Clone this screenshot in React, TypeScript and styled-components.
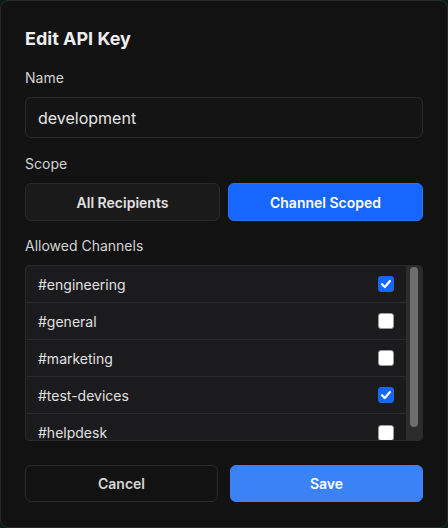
import React, { useState } from "react";
import styled, { createGlobalStyle } from "styled-components";

const Global = createGlobalStyle`
  * { box-sizing: border-box; }
  html, body { margin: 0; padding: 0; background: #0c1a14; }
  body { font-family: Inter, "Noto Sans", sans-serif; -webkit-font-smoothing: antialiased; }
`;

const Card = styled.div`
  width: 448px;
  height: 528px;
  background: #121212;
  border: 1px solid #2a2a2a;
  border-radius: 8px;
  padding: 24px 24px 25px;
  display: flex;
  flex-direction: column;
`;

const Title = styled.h2`
  margin: 0 0 17px;
  padding-top: 2px;
  font-size: 18px;
  line-height: 24px;
  font-weight: 700;
  color: #ededed;
`;

const Label = styled.div`
  font-size: 14px;
  line-height: 20px;
  color: #d2d2d2;
  margin-bottom: 9px;
`;

const Field = styled.div<{ $mb: number }>`
  display: flex;
  flex-direction: column;
  margin-bottom: ${(p) => p.$mb}px;
`;

const Input = styled.input`
  height: 41px;
  width: 100%;
  background: #141414;
  border: 1px solid #2a2a2a;
  border-radius: 6px;
  padding: 0 12px;
  font-family: inherit;
  font-size: 16px;
  color: #e6e6e6;
  outline: none;
`;

const Segments = styled.div`
  display: grid;
  grid-template-columns: 1fr 1fr;
  gap: 8px;
`;

const SegButton = styled.button<{ $active: boolean }>`
  height: 38px;
  border-radius: 6px;
  font-family: inherit;
  font-size: 14px;
  font-weight: 600;
  cursor: pointer;
  background: ${(p) => (p.$active ? "#1766fe" : "#1a1a1a")};
  border: 1px solid ${(p) => (p.$active ? "#2a72ff" : "#2a2a2a")};
  color: ${(p) => (p.$active ? "#ffffff" : "#e2e2e2")};
`;

const List = styled.div`
  height: 176px;
  border: 1px solid #2a2a2a;
  border-radius: 4px;
  background: #1b1b1d;
  display: flex;
  overflow: hidden;
`;

const Rows = styled.div`
  flex: 1;
  overflow: hidden;
`;

const Track = styled.div`
  width: 16px;
  background: #2c2c2c;
  display: flex;
  justify-content: center;
  padding-top: 1px;
`;

const Thumb = styled.div`
  width: 8px;
  height: 160px;
  border-radius: 4px;
  background: #6e6e6e;
`;

const Row = styled.label`
  height: 37px;
  display: flex;
  align-items: center;
  justify-content: space-between;
  padding: 0 12px;
  border-bottom: 1px solid #2a2a2a;
  font-size: 14px;
  color: #e0e0e0;
  cursor: pointer;
  &:last-child { border-bottom: none; }
`;

const Box = styled.span<{ $checked: boolean }>`
  width: 16px;
  height: 16px;
  border-radius: 3px;
  display: flex;
  align-items: center;
  justify-content: center;
  background: ${(p) => (p.$checked ? "#1766fe" : "#ffffff")};
  border: 1px solid ${(p) => (p.$checked ? "#1766fe" : "#9a9a9a")};
`;

const Footer = styled.div`
  margin-top: auto;
  display: grid;
  grid-template-columns: 1fr 1fr;
  gap: 12px;
`;

const FooterButton = styled.button<{ $primary?: boolean }>`
  height: 37px;
  border-radius: 6px;
  font-family: inherit;
  font-size: 14px;
  font-weight: 600;
  cursor: pointer;
  background: ${(p) => (p.$primary ? "#3b82f6" : "transparent")};
  border: 1px solid ${(p) => (p.$primary ? "#3b82f6" : "#2a2a2a")};
  color: ${(p) => (p.$primary ? "#ffffff" : "#d6d6d6")};
`;

const Check = () => (
  <svg width="12" height="12" viewBox="0 0 12 12">
    <path d="M2 6.2 L4.8 9 L10 3" fill="none" stroke="#fff" strokeWidth="2.2" strokeLinecap="round" strokeLinejoin="round" />
  </svg>
);

const channels = [
  { name: "#engineering", on: true },
  { name: "#general", on: false },
  { name: "#marketing", on: false },
  { name: "#test-devices", on: true },
  { name: "#helpdesk", on: false },
];

export default function App() {
  const [scope, setScope] = useState("channel");
  const [sel, setSel] = useState(channels.map((c) => c.on));
  return (
    <>
      <Global />
      <Card>
        <Title>Edit API Key</Title>
        <Field $mb={16}>
          <Label>Name</Label>
          <Input defaultValue="development" />
        </Field>
        <Field $mb={15}>
          <Label>Scope</Label>
          <Segments>
            <SegButton $active={scope === "all"} onClick={() => setScope("all")}>All Recipients</SegButton>
            <SegButton $active={scope === "channel"} onClick={() => setScope("channel")}>Channel Scoped</SegButton>
          </Segments>
        </Field>
        <Field $mb={0}>
          <Label>Allowed Channels</Label>
          <List>
            <Rows>
              {channels.map((c, i) => (
                <Row key={c.name} onClick={() => setSel(sel.map((v, j) => (j === i ? !v : v)))}>
                  <span>{c.name}</span>
                  <Box $checked={sel[i]}>{sel[i] && <Check />}</Box>
                </Row>
              ))}
            </Rows>
            <Track>
              <Thumb />
            </Track>
          </List>
        </Field>
        <Footer>
          <FooterButton>Cancel</FooterButton>
          <FooterButton $primary>Save</FooterButton>
        </Footer>
      </Card>
    </>
  );
}
